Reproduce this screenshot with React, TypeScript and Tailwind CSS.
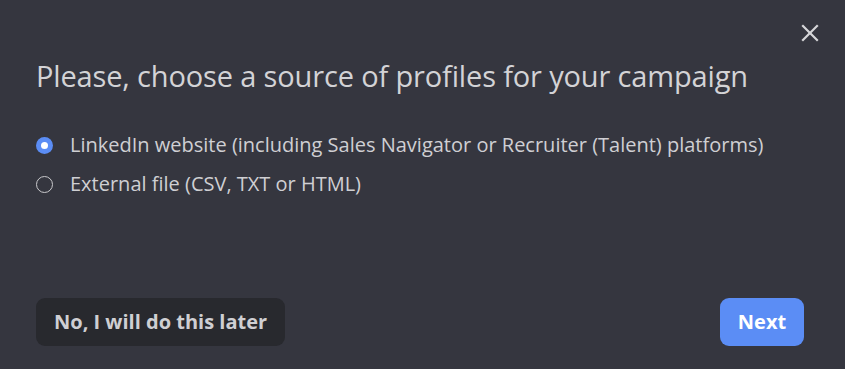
import React, { useState } from "react";

export default function App() {
  const [sel, setSel] = useState(0);
  const opts = [
    "LinkedIn website (including Sales Navigator or Recruiter (Talent) platforms)",
    "External file (CSV, TXT or HTML)",
  ];
  return (
    <div className="w-[845px] h-[369px] bg-[#35363f] relative flex flex-col px-[36px] pt-[54px] pb-[23px]" style={{ fontFamily: "'Open Sans', 'Noto Sans', sans-serif" }}>
      <button className="absolute right-[26px] top-[24px] w-[18px] h-[18px] text-[#d6d6d9]">
        <svg viewBox="0 0 18 18" width="18" height="18" stroke="currentColor" strokeWidth="2.2" strokeLinecap="square">
          <line x1="2" y1="2" x2="16" y2="16" />
          <line x1="16" y1="2" x2="2" y2="16" />
        </svg>
      </button>
      <h1 className="text-[29px] leading-[44px] text-[#d3d3d6] font-normal tracking-[-0.15px]">
        Please, choose a source of profiles for your campaign
      </h1>
      <div className="mt-[33px] flex flex-col gap-[11px]">
        {opts.map((o, i) => (
          <label key={i} className="flex items-center gap-[17px] h-[28px] cursor-pointer" onClick={() => setSel(i)}>
            <span className={
              i === sel
                ? "w-[17px] h-[17px] rounded-full bg-[#5b8df5] flex items-center justify-center shrink-0"
                : "w-[17px] h-[17px] rounded-full border border-[#c9c9cc] shrink-0"
            }>
              {i === sel && <span className="w-[7px] h-[7px] rounded-full bg-white" />}
            </span>
            <span className="text-[20px] text-[#cfcfd3] whitespace-nowrap">{o}</span>
          </label>
        ))}
      </div>
      <div className="mt-auto flex items-center justify-between">
        <button className="h-[48px] px-[18px] rounded-[9px] bg-[#28292e] text-[#cfcfd3] text-[20px] font-bold">
          No, I will do this later
        </button>
        <button className="h-[48px] w-[84px] mr-[5px] rounded-[9px] bg-[#5b8df5] text-white text-[20px] font-bold">
          Next
        </button>
      </div>
    </div>
  );
}
